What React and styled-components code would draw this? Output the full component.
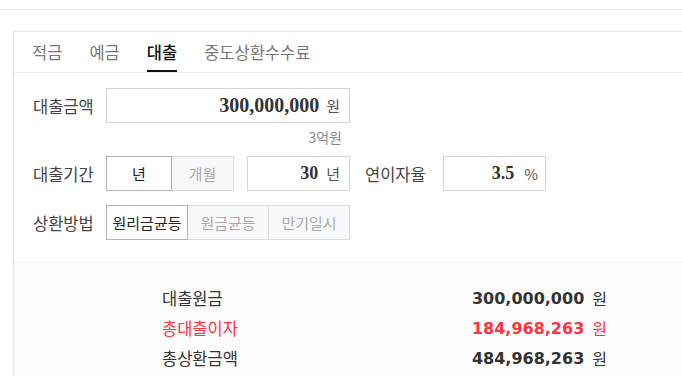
import { createGlobalStyle } from "styled-components";
import styled from "styled-components";

const GlobalStyle = createGlobalStyle`
  html, body {
    margin: 0;
    padding: 0;
    background: #fff;
    overflow: hidden;
  }
  body {
    font-family: "Noto Sans CJK KR", "Noto Sans", sans-serif;
    color: #333;
  }
`;

const TopBar = styled.div`
  height: 9px;
  border-bottom: 1px solid #ececec;
`;

const Panel = styled.section`
  margin: 21px 0 0 13px;
  border-top: 1px solid #e6e6e6;
  border-left: 1px solid #e6e6e6;
`;

const TabBar = styled.nav`
  display: flex;
  height: 40px;
  padding-left: 18px;
  border-bottom: 1px solid #ececec;
`;

const Tab = styled.div`
  display: flex;
  align-items: center;
  margin-right: 27px;
  font-size: 16.5px;
  color: ${(p) => (p.$active ? "#111" : "#777")};
  font-weight: ${(p) => (p.$active ? 500 : 400)};
  border-bottom: 2px solid ${(p) => (p.$active ? "#111" : "transparent")};
  box-sizing: border-box;
  padding-top: 2px;
`;

const Form = styled.div`
  padding: 15px 0 22px 19px;
`;

const Row = styled.div`
  display: flex;
  align-items: center;
  height: 35px;
  margin-top: ${(p) => p.$gap || 0}px;
`;

const Label = styled.div`
  width: ${(p) => p.$width || 73}px;
  margin-left: ${(p) => p.$offset || 0}px;
  flex-shrink: 0;
  font-size: 16.5px;
  color: #444;
`;

const ValueBox = styled.div`
  display: flex;
  align-items: center;
  justify-content: flex-end;
  box-sizing: border-box;
  width: ${(p) => p.$width}px;
  height: 35px;
  margin-left: ${(p) => p.$offset || 0}px;
  padding-right: ${(p) => p.$pad || 9}px;
  border: 1px solid #d4d4d4;
  background: #fff;
`;

const Num = styled.span`
  font-family: "Liberation Serif", serif;
  font-weight: 700;
  font-size: ${(p) => p.$size || 18}px;
  color: #333;
`;

const Unit = styled.span`
  margin-left: ${(p) => p.$gap || 7}px;
  font-size: 15px;
  color: #555;
`;

const Hint = styled.div`
  width: 236px;
  height: 33px;
  margin-left: 73px;
  padding-top: 6px;
  box-sizing: border-box;
  text-align: right;
  font-size: 14px;
  line-height: 16px;
  color: #888;
`;

const Toggle = styled.div`
  display: flex;
`;

const ToggleButton = styled.div`
  position: relative;
  z-index: ${(p) => (p.$active ? 1 : 0)};
  display: flex;
  align-items: center;
  justify-content: center;
  box-sizing: border-box;
  width: ${(p) => p.$width}px;
  height: 35px;
  margin-left: ${(p) => (p.$first ? 0 : -1)}px;
  border: 1px solid ${(p) => (p.$active ? "#b3b3b3" : "#d9dbe0")};
  background: ${(p) => (p.$active ? "#fff" : "#f7f8fa")};
  color: ${(p) => (p.$active ? "#222" : "#aaa")};
  font-size: 15px;
  white-space: nowrap;
`;

const Results = styled.div`
  border-top: 1px solid #eeeeee;
  background: #fcfcfc;
  padding: 20px 0 10px 148px;
`;

const ResultRow = styled.div`
  display: flex;
  align-items: center;
  justify-content: space-between;
  width: 445px;
  height: 30px;
  color: ${(p) => (p.$red ? "#ff3340" : "#333")};
`;

const ResultLabel = styled.span`
  font-size: 16.5px;
`;

const ResultValue = styled.span`
  display: flex;
  align-items: center;
`;

const ResultNum = styled.span`
  font-family: "DejaVu Sans", sans-serif;
  font-weight: 700;
  font-size: 16px;
`;

const ResultUnit = styled.span`
  margin-left: 8px;
  font-size: 16px;
`;

const tabs = ["적금", "예금", "대출", "중도상환수수료"];

const results = [
  { label: "대출원금", value: "300,000,000" },
  { label: "총대출이자", value: "184,968,263", red: true },
  { label: "총상환금액", value: "484,968,263" },
];

export default function App() {
  return (
    <>
      <GlobalStyle />
      <TopBar />
      <Panel>
        <TabBar>
          {tabs.map((t) => (
            <Tab key={t} $active={t === "대출"}>
              {t}
            </Tab>
          ))}
        </TabBar>

        <Form>
          <Row>
            <Label>대출금액</Label>
            <ValueBox $width={244}>
              <Num $size={20}>300,000,000</Num>
              <Unit>원</Unit>
            </ValueBox>
          </Row>
          <Hint>3억원</Hint>

          <Row>
            <Label>대출기간</Label>
            <Toggle>
              <ToggleButton $first $active $width={66}>
                년
              </ToggleButton>
              <ToggleButton $width={63}>개월</ToggleButton>
            </Toggle>
            <ValueBox $width={103} $offset={13}>
              <Num>30</Num>
              <Unit $gap={8}>년</Unit>
            </ValueBox>
            <Label $offset={15} $width={78}>
              연이자율
            </Label>
            <ValueBox $width={103} $pad={7}>
              <Num>3.5</Num>
              <Unit $gap={10}>%</Unit>
            </ValueBox>
          </Row>

          <Row $gap={14}>
            <Label>상환방법</Label>
            <Toggle>
              <ToggleButton $first $active $width={82}>
                원리금균등
              </ToggleButton>
              <ToggleButton $width={82}>원금균등</ToggleButton>
              <ToggleButton $width={82}>만기일시</ToggleButton>
            </Toggle>
          </Row>
        </Form>

        <Results>
          {results.map((r) => (
            <ResultRow key={r.label} $red={r.red}>
              <ResultLabel>{r.label}</ResultLabel>
              <ResultValue>
                <ResultNum>{r.value}</ResultNum>
                <ResultUnit>원</ResultUnit>
              </ResultValue>
            </ResultRow>
          ))}
        </Results>
      </Panel>
    </>
  );
}
